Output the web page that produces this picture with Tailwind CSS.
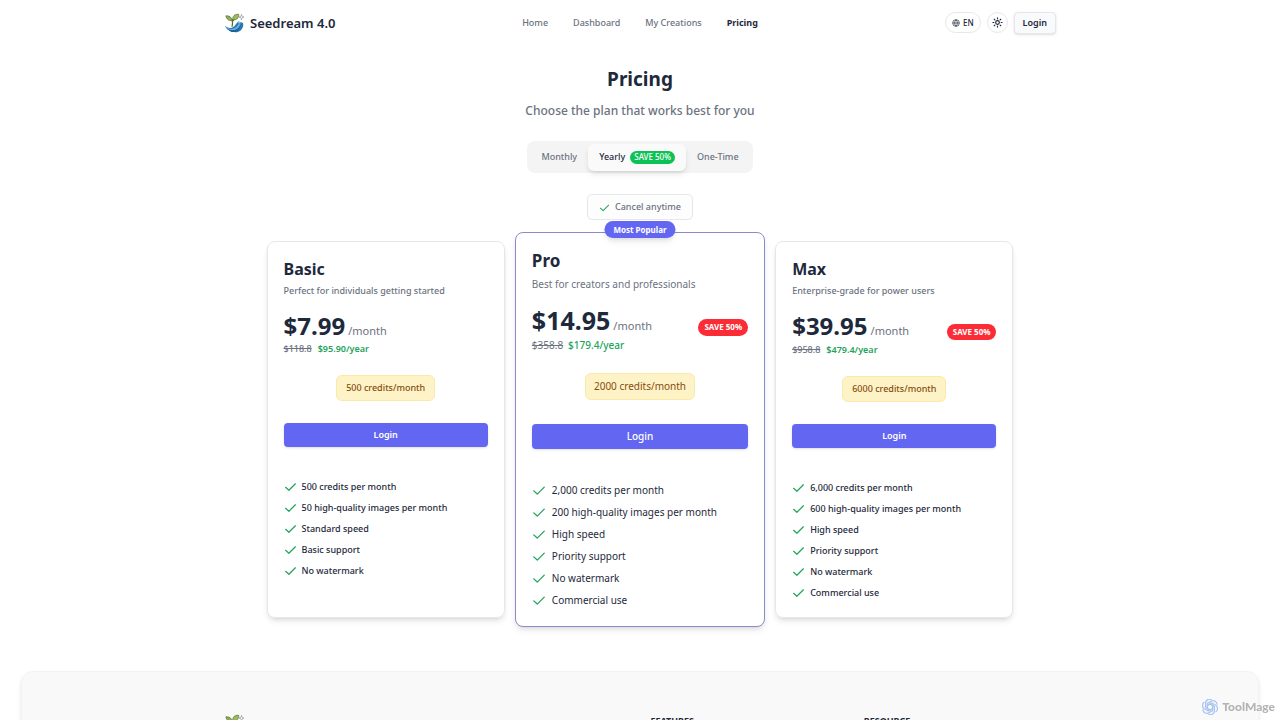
<!DOCTYPE html>
<html lang="en">
<head>
  <meta charset="UTF-8">
  <meta name="viewport" content="width=device-width, initial-scale=1.0">
  <title>Pricing - Seedream 4.0</title>
  <script src="https://cdn.jsdelivr.net/npm/@tailwindcss/browser@4"></script>
</head>
<body class="bg-white text-[#1e293b] font-['Noto_Sans',sans-serif] min-h-screen overflow-x-hidden">

  <!-- Shared icons -->
  <svg class="hidden" aria-hidden="true">
    <symbol id="check" viewBox="0 0 24 24" fill="none" stroke="currentColor" stroke-width="2.2" stroke-linecap="round" stroke-linejoin="round">
      <path d="M21 7 9 19l-6-5.500"/>
    </symbol>
    <symbol id="logo" viewBox="0 0 64 64">
      <path d="M3 41c8 8 20 9 28 3 8-6 11-18 22-19-6 2-8 5-6 9 2-6 10-6 14-1 3 12-5 24-17 28C27 64 9 57 3 41Z" fill="#2b78b4"/>
      <path d="M3 41c10 12 26 13 36 4 7-6 9-15 17-17-5 5-5 18-14 24C29 60 12 56 3 41Z" fill="#5fb3dc"/>
      <path d="M14 52c14 7 30 3 39-12-2 13-12 21-24 21-6 0-11-3-15-9Z" fill="#1d5c98"/>
      <path d="M26 43c2-8 2-14 0-22M27 27c3-5 6-8 11-11" fill="none" stroke="#5d6f2c" stroke-width="4" stroke-linecap="round"/>
      <path d="M26 24C15 26 8 20 6 9c11-1 19 4 20 15Z" fill="#8fae55" stroke="#4d652c" stroke-width="2"/>
      <path d="M28 22C27 10 34 3 47 4c1 12-6 19-19 18Z" fill="#9bbb5c" stroke="#4d652c" stroke-width="2"/>
      <path d="M56 4l2 7 6 2-6 2-2 7-2-7-6-2 6-2Z" fill="#ffffff" stroke="#65737e" stroke-width="1.5"/>
    </symbol>
  </svg>

  <!-- Header -->
  <header class="max-w-[832px] mx-auto h-[45px] grid grid-cols-3 items-center">
    <a href="#" class="flex items-center gap-[6px]">
      <svg class="size-5"><use href="#logo"/></svg>
      <span class="text-[13px] font-semibold leading-5">Seedream 4.0</span>
    </a>
    <nav class="flex justify-center gap-[25px] text-[9px] font-medium text-[#6b7280] whitespace-nowrap">
      <a href="#">Home</a>
      <a href="#">Dashboard</a>
      <a href="#">My Creations</a>
      <a href="#" class="font-bold text-[#1e293b]">Pricing</a>
    </nav>
    <div class="flex items-center justify-end gap-[6px]">
      <button class="flex items-center gap-[3px] h-[21px] px-[6px] rounded-full border border-gray-200 text-[8px] font-medium">
        <svg class="size-2" viewBox="0 0 24 24" fill="none" stroke="currentColor" stroke-width="2">
          <circle cx="12" cy="12" r="10"/>
          <path d="M12 2a14.5 14.5 0 0 0 0 20 14.5 14.5 0 0 0 0-20M2 12h20"/>
        </svg>
        EN
      </button>
      <button class="flex items-center justify-center size-[21px] rounded-full border border-gray-200" aria-label="Toggle theme">
        <svg class="size-[11px]" viewBox="0 0 24 24" fill="none" stroke="currentColor" stroke-width="2.5" stroke-linecap="round">
          <circle cx="12" cy="12" r="4"/>
          <path d="M12 2v2M12 20v2M4.900 4.900l1.400 1.400M17.700 17.700l1.400 1.400M2 12h2M20 12h2M6.300 17.700l-1.400 1.400M19.100 4.900l-1.400 1.400"/>
        </svg>
      </button>
      <button class="h-[22px] px-2 rounded-[4px] border border-gray-200 bg-gray-50 text-[9px] font-semibold shadow-sm">Login</button>
    </div>
  </header>

  <main class="max-w-[747px] mx-auto pt-5">
    <h1 class="text-[19px] leading-7 font-bold text-center">Pricing</h1>
    <p class="mt-2 text-[12px] leading-5 font-medium text-center text-[#6b7280]">Choose the plan that works best for you</p>

    <!-- Billing period -->
    <div class="mt-5 flex justify-center">
      <div class="flex items-center p-[3px] h-8 rounded-lg bg-[#f4f4f5] text-[9px] font-medium text-[#6b7280]">
        <button class="h-[26px] px-[11px]">Monthly</button>
        <button class="h-[27px] px-[11px] flex items-center gap-[5px] rounded-md bg-[#fafafa] text-[#1e293b] shadow-md">
          Yearly
          <span class="h-[13px] px-1 flex items-center rounded-full bg-[#0cc255] text-white text-[8px]">SAVE 50%</span>
        </button>
        <button class="h-[26px] px-[11px]">One-Time</button>
      </div>
    </div>

    <div class="mt-[21px] flex justify-center">
      <div class="flex items-center gap-[5px] h-[26px] px-[11px] rounded-[5px] border border-gray-200 bg-[#fdfdfd] text-[9px] font-medium text-[#6b7280]">
        <svg class="size-[11px] text-[#22a35a]"><use href="#check"/></svg>
        Cancel anytime
      </div>
    </div>

    <!-- Plans -->
    <div class="mt-[21px] grid grid-cols-3 gap-4">

      <section class="h-[377px] px-4 pt-[17px] rounded-lg border border-gray-200 shadow-md">
        <h2 class="text-[16px] leading-5 font-bold">Basic</h2>
        <p class="mt-1 text-[9px] leading-4 font-medium text-[#6b7280]">Perfect for individuals getting started</p>
        <div class="mt-[11px] h-[33px] flex items-baseline gap-[3px]">
          <span class="text-[24px] leading-8 font-bold">$7.99</span>
          <span class="text-[11px] text-[#6b7280]">/month</span>
        </div>
        <p class="flex gap-[6px] text-[9px] leading-3 font-semibold"><s class="font-medium text-[#6b7280]">$118.8</s><span class="text-[#22a35a]">$95.90/year</span></p>
        <div class="mt-5 mx-auto w-fit h-[26px] px-[9px] flex items-center rounded-md border border-[#fbe9a8] bg-[#fef3c7] text-[#854d0e] text-[9px] font-medium">500 credits/month</div>
        <button class="mt-[22px] w-full h-6 rounded-[4px] bg-[#6366f1] text-white text-[9px] font-semibold shadow-sm">Login</button>
        <ul class="mt-[33px] space-y-2 text-[9px] leading-[13px] font-medium">
          <li class="flex items-center gap-[5px]"><svg class="size-[13px] text-[#22a35a]"><use href="#check"/></svg>500 credits per month</li>
          <li class="flex items-center gap-[5px]"><svg class="size-[13px] text-[#22a35a]"><use href="#check"/></svg>50 high-quality images per month</li>
          <li class="flex items-center gap-[5px]"><svg class="size-[13px] text-[#22a35a]"><use href="#check"/></svg>Standard speed</li>
          <li class="flex items-center gap-[5px]"><svg class="size-[13px] text-[#22a35a]"><use href="#check"/></svg>Basic support</li>
          <li class="flex items-center gap-[5px]"><svg class="size-[13px] text-[#22a35a]"><use href="#check"/></svg>No watermark</li>
        </ul>
      </section>

      <!-- Highlighted plan, a bit larger than its neighbours -->
      <section class="relative -mx-[6px] -my-[9px] px-4 pt-[18px] rounded-lg border border-[#8b8bcb] bg-white shadow-md">
        <span class="absolute -top-3 left-1/2 -translate-x-1/2 h-[17px] px-[9px] flex items-center rounded-full bg-[#6366f1] text-white text-[8px] font-bold whitespace-nowrap shadow-md">Most Popular</span>
        <h2 class="text-[17px] leading-5 font-bold">Pro</h2>
        <p class="mt-[5px] text-[10px] leading-4 text-[#6b7280]">Best for creators and professionals</p>
        <div class="mt-3 mb-[2px] h-8 flex items-center justify-between">
          <div class="flex items-baseline gap-[3px]">
            <span class="text-[25px] leading-8 font-bold">$14.95</span>
            <span class="text-[11px] text-[#6b7280]">/month</span>
          </div>
          <span class="mt-[14px] h-[17px] px-[6px] flex items-center rounded-full bg-[#fb2c36] text-white text-[8px] font-bold">SAVE 50%</span>
        </div>
        <p class="flex gap-[5px] text-[10px] leading-[14px] font-medium"><s class="font-normal text-[#6b7280]">$358.8</s><span class="text-[#22a35a]">$179.4/year</span></p>
        <div class="mt-[21px] mx-auto w-fit h-[27px] px-2 flex items-center rounded-md border border-[#fbe9a8] bg-[#fef3c7] text-[#854d0e] text-[10px]">2000 credits/month</div>
        <button class="mt-6 w-full h-[25px] rounded-[4px] bg-[#6366f1] text-white text-[10px] font-medium shadow-sm">Login</button>
        <ul class="mt-[34px] space-y-2 text-[10px] leading-[14px]">
          <li class="flex items-center gap-[6px]"><svg class="size-[14px] text-[#22a35a]"><use href="#check"/></svg>2,000 credits per month</li>
          <li class="flex items-center gap-[6px]"><svg class="size-[14px] text-[#22a35a]"><use href="#check"/></svg>200 high-quality images per month</li>
          <li class="flex items-center gap-[6px]"><svg class="size-[14px] text-[#22a35a]"><use href="#check"/></svg>High speed</li>
          <li class="flex items-center gap-[6px]"><svg class="size-[14px] text-[#22a35a]"><use href="#check"/></svg>Priority support</li>
          <li class="flex items-center gap-[6px]"><svg class="size-[14px] text-[#22a35a]"><use href="#check"/></svg>No watermark</li>
          <li class="flex items-center gap-[6px]"><svg class="size-[14px] text-[#22a35a]"><use href="#check"/></svg>Commercial use</li>
        </ul>
      </section>

      <section class="px-4 pt-[17px] rounded-lg border border-gray-200 shadow-md">
        <h2 class="text-[16px] leading-5 font-bold">Max</h2>
        <p class="mt-1 text-[9px] leading-4 font-medium text-[#6b7280]">Enterprise-grade for power users</p>
        <div class="mt-[11px] mb-[2px] h-8 flex items-center justify-between">
          <div class="flex items-baseline gap-[3px]">
            <span class="text-[24px] leading-8 font-bold">$39.95</span>
            <span class="text-[11px] text-[#6b7280]">/month</span>
          </div>
          <span class="mt-3 h-4 px-[6px] flex items-center rounded-full bg-[#fb2c36] text-white text-[8px] font-bold">SAVE 50%</span>
        </div>
        <p class="flex gap-[6px] text-[9px] leading-3 font-semibold"><s class="font-medium text-[#6b7280]">$958.8</s><span class="text-[#22a35a]">$479.4/year</span></p>
        <div class="mt-5 mx-auto w-fit h-[26px] px-[9px] flex items-center rounded-md border border-[#fbe9a8] bg-[#fef3c7] text-[#854d0e] text-[9px] font-medium">6000 credits/month</div>
        <button class="mt-[22px] w-full h-6 rounded-[4px] bg-[#6366f1] text-white text-[9px] font-semibold shadow-sm">Login</button>
        <ul class="mt-[33px] space-y-2 text-[9px] leading-[13px] font-medium">
          <li class="flex items-center gap-[5px]"><svg class="size-[13px] text-[#22a35a]"><use href="#check"/></svg>6,000 credits per month</li>
          <li class="flex items-center gap-[5px]"><svg class="size-[13px] text-[#22a35a]"><use href="#check"/></svg>600 high-quality images per month</li>
          <li class="flex items-center gap-[5px]"><svg class="size-[13px] text-[#22a35a]"><use href="#check"/></svg>High speed</li>
          <li class="flex items-center gap-[5px]"><svg class="size-[13px] text-[#22a35a]"><use href="#check"/></svg>Priority support</li>
          <li class="flex items-center gap-[5px]"><svg class="size-[13px] text-[#22a35a]"><use href="#check"/></svg>No watermark</li>
          <li class="flex items-center gap-[5px]"><svg class="size-[13px] text-[#22a35a]"><use href="#check"/></svg>Commercial use</li>
        </ul>
      </section>
    </div>
  </main>

  <!-- Footer -->
  <footer class="mt-[53px] mx-[21px] pt-[42px] pb-10 rounded-t-xl border border-gray-100 bg-[#f9f9f9] shadow-md">
    <div class="max-w-[832px] mx-auto grid grid-cols-4 gap-[21px]">
      <a href="#" class="col-span-2"><svg class="size-5"><use href="#logo"/></svg></a>
      <h3 class="text-[9px] leading-[13px] font-bold">FEATURES</h3>
      <h3 class="text-[9px] leading-[13px] font-bold">RESOURCE</h3>
    </div>
  </footer>

  <div class="fixed right-[5px] bottom-[5px] flex items-center gap-1 text-[#b4b4b4] font-['Lato',sans-serif] text-[12px] leading-4 font-black">
    <svg class="size-4 text-[#a9c4f2]" viewBox="3 3 18 18" fill="none" stroke="currentColor" stroke-width="1.4">
      <path id="petal" d="M12 8.5 15 10.2V16l-4.500 2.600a4.500 4.500 0 0 1-6.500-4"/>
      <use href="#petal" transform="rotate(60 12 12)"/>
      <use href="#petal" transform="rotate(120 12 12)"/>
      <use href="#petal" transform="rotate(180 12 12)"/>
      <use href="#petal" transform="rotate(240 12 12)"/>
      <use href="#petal" transform="rotate(300 12 12)"/>
    </svg>
    ToolMage
  </div>
</body>
</html>
